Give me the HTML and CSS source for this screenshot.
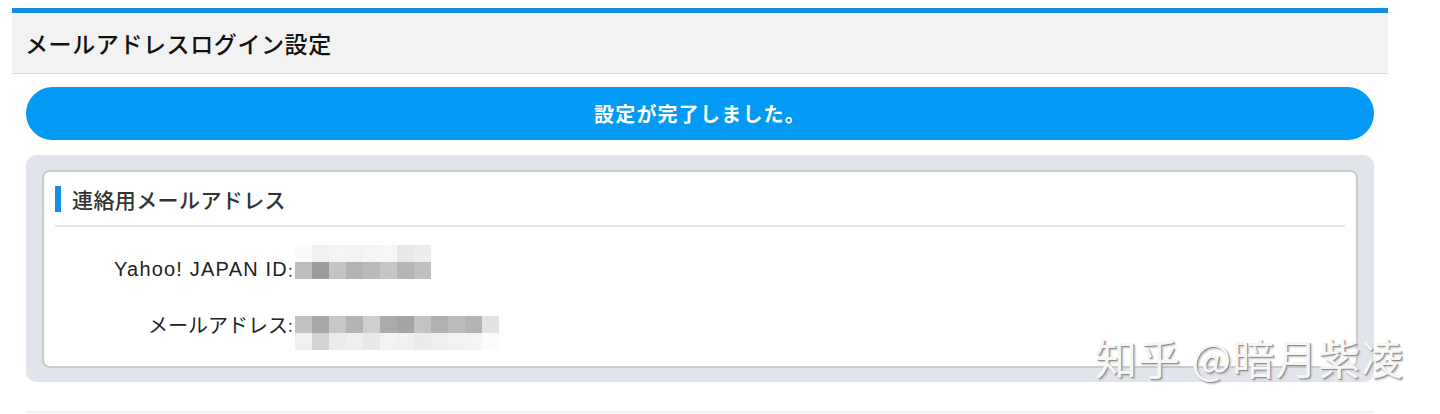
FILE: index.html
```html
<!DOCTYPE html>
<html lang="ja">
<head>
<meta charset="utf-8">
<link rel="stylesheet" href="styles.css">
</head>
<body>
<div class="page">
  <div class="page-head"><h1 class="title">メールアドレスログイン設定</h1></div>
  <div class="notice">設定が完了しました。</div>
  <div class="panel">
    <div class="card">
      <h2 class="card-title"><span class="bar"></span>連絡用メールアドレス</h2>
      <div class="rows">
        <div class="row">
          <span class="label latin">Yahoo! JAPAN ID</span><span class="colon">:</span>
          <div class="mosaic up">
            <div class="mrow"><i style="background:#fafafa"></i><i style="background:#f0f0f0"></i><i style="background:#f4f4f4"></i><i style="background:#f2f2f2"></i><i style="background:#f5f5f5"></i><i style="background:#f6f6f6"></i><i style="background:#e8e8e8"></i><i style="background:#ededed"></i></div>
            <div class="mrow"><i style="background:#bdbdbd"></i><i style="background:#9c9c9c"></i><i style="background:#c4c4c4"></i><i style="background:#b2b2b2"></i><i style="background:#bababa"></i><i style="background:#c6c6c6"></i><i style="background:#b5b5b5"></i><i style="background:#c0c0c0"></i></div>
          </div>
        </div>
        <div class="row row2">
          <span class="label">メールアドレス</span><span class="colon">:</span>
          <div class="mosaic down">
            <div class="mrow"><i style="background:#c2c2c2"></i><i style="background:#a8a8a8"></i><i style="background:#c8c8c8"></i><i style="background:#b4b4b4"></i><i style="background:#cfcfcf"></i><i style="background:#ababab"></i><i style="background:#a5a5a5"></i><i style="background:#c3c3c3"></i><i style="background:#b0b0b0"></i><i style="background:#bcbcbc"></i><i style="background:#b3b3b3"></i><i style="background:#e2e2e2"></i></div>
            <div class="mrow"><i style="background:#f0f0f0"></i><i style="background:#d2d2d2"></i><i style="background:#ececec"></i><i style="background:#efefef"></i><i style="background:#e8e8e8"></i><i style="background:#f3f3f3"></i><i style="background:#f1f1f1"></i><i style="background:#ebebeb"></i><i style="background:#eeeeee"></i><i style="background:#f2f2f2"></i><i style="background:#f4f4f4"></i><i style="background:#fbfbfb"></i></div>
          </div>
        </div>
      </div>
    </div>
  </div>
  <div class="foot"></div>
  <div class="watermark">知乎 @暗月紫凌</div>
</div>
</body>
</html>
```

FILE: styles.css
```css
html, body {
  margin: 0;
  padding: 0;
  background: #ffffff;
}
body {
  font-family: "Noto Sans CJK JP", "Liberation Sans", sans-serif;
  color: #222;
  padding-top: 8px;
}
.page {
  position: relative;
  margin-left: 12px;
  width: 1376px;
}
.page-head {
  border-top: 5px solid #128fe2;
  background: #f2f2f2;
  border-bottom: 1px solid #d9d9d9;
  height: 60px;
  display: flex;
  align-items: center;
  padding-left: 13px;
}
.title {
  margin: 0;
  font-size: 23px;
  font-weight: 500;
  color: #111;
  letter-spacing: 0.6px;
}
.notice {
  margin: 13px 14px 0;
  height: 53px;
  border-radius: 27px;
  background: #039af6;
  color: #fff;
  font-size: 20px;
  font-weight: 700;
  display: flex;
  align-items: center;
  justify-content: center;
  letter-spacing: 1.2px;
}
.panel {
  margin: 15px 14px 0;
  background: #e1e4ea;
  border-radius: 10px;
  padding: 15px 16px 14px;
}
.card {
  background: #fff;
  border: 2px solid #c8cace;
  border-radius: 8px;
  height: 198px;
  box-sizing: border-box;
  padding: 12px 11px 0;
}
.card-title {
  margin: 0;
  display: flex;
  align-items: center;
  gap: 11px;
  font-size: 21px;
  font-weight: 500;
  color: #333;
  letter-spacing: 0.4px;
  padding-bottom: 11px;
  border-bottom: 2px solid #e6e6e6;
}
.bar {
  width: 6px;
  height: 26px;
  background: #1a8fe0;
}
.rows {
  display: flex;
  flex-direction: column;
  padding-top: 24px;
}
.row {
  display: flex;
  align-items: center;
  height: 36px;
}
.row2 {
  margin-top: 19px;
}
.label {
  width: 233px;
  text-align: right;
  font-size: 20px;
  color: #222;
}
.label.latin {
  font-family: "Liberation Sans", "Noto Sans CJK JP", sans-serif;
  font-size: 20px;
  letter-spacing: 1.2px;
}
.colon {
  width: 7px;
  font-size: 17px;
  color: #444;
}
.mosaic {
  display: flex;
  flex-direction: column;
}
.mosaic.up {
  margin-top: -15px;
}
.mosaic.down {
  margin-top: 17px;
}
.mrow {
  display: flex;
  height: 17px;
}
.mrow i {
  display: block;
  width: 17px;
  height: 17px;
}
.foot {
  margin: 29px 14px 0;
  border-top: 2px solid #f2f2f2;
  height: 2px;
}
.watermark {
  position: absolute;
  left: 1083px;
  top: 318px;
  font-size: 42px;
  color: #f6f6f6;
  font-weight: 400;
  letter-spacing: 1px;
  text-shadow: 1px 1px 0 #8f8f8f, 2px 2px 2px #c0c0c0;
  white-space: nowrap;
}
```
